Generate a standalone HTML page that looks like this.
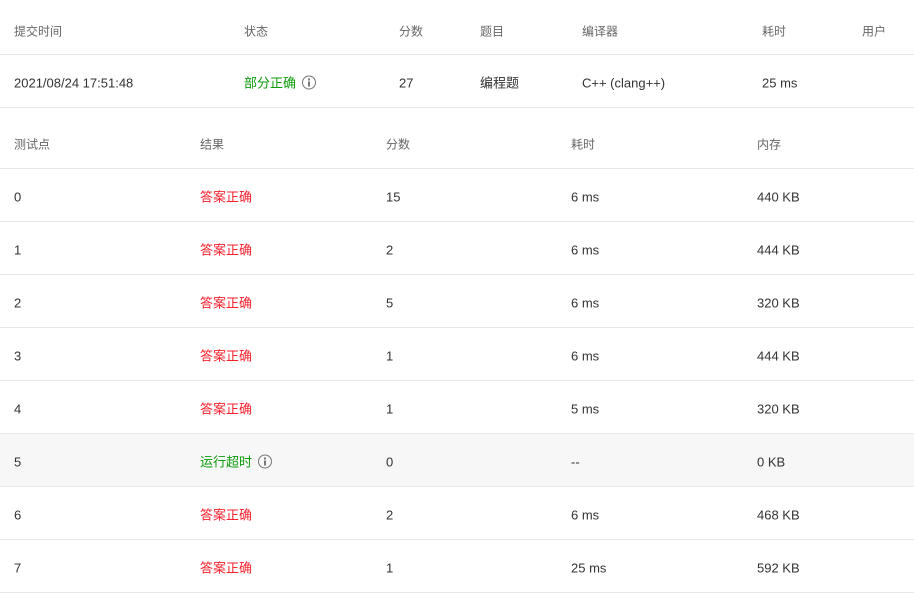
<!DOCTYPE html>
<html><head><meta charset="utf-8"><style>
html,body{margin:0;padding:0;background:#fff;width:914px;height:593px;overflow:hidden}
body{font-family:"Liberation Sans","Noto Sans CJK SC",sans-serif;font-size:13px;color:#333;position:relative}
.r{position:absolute;left:0;width:914px;border-bottom:1px solid #e8e8e8;box-sizing:border-box}
.c{position:absolute;top:calc(50% + 2px);transform:translateY(-50%);white-space:nowrap}
.h{color:#666;font-size:12px}
.red{color:#f5222d}
.grn{color:#0a9b0a}
.red,.grn{top:calc(50% + 1px)}
.i{display:inline-block;width:14px;height:14px;border:1.3px solid #777;border-radius:50%;box-sizing:border-box;vertical-align:-2px;margin-left:6px;position:relative}
.i:before{content:"";position:absolute;left:4.9px;top:2px;width:1.6px;height:1.6px;background:#777}
.i:after{content:"";position:absolute;left:4.9px;top:4.8px;width:1.6px;height:5px;background:#777}
</style></head><body>
<div class="r h" style="top:0;height:55px">
<span class="c" style="left:14px;top:31px">提交时间</span><span class="c" style="left:244px;top:31px">状态</span><span class="c" style="left:399px;top:31px">分数</span><span class="c" style="left:480px;top:31px">题目</span><span class="c" style="left:582px;top:31px">编译器</span><span class="c" style="left:762px;top:31px">耗时</span><span class="c" style="left:862px;top:31px">用户</span></div>
<div class="r" style="top:55px;height:53px">
<span class="c" style="left:14px">2021/08/24 17:51:48</span><span class="c grn" style="left:244px">部分正确<span class="i"></span></span><span class="c" style="left:399px">27</span><span class="c" style="left:480px;top:calc(50% + 1px)">编程题</span><span class="c" style="left:582px">C++ (clang++)</span><span class="c" style="left:762px">25 ms</span></div>
<div class="r h" style="top:120px;height:49px">
<span class="c" style="left:14px;top:24px">测试点</span><span class="c" style="left:200px;top:24px">结果</span><span class="c" style="left:386px;top:24px">分数</span><span class="c" style="left:571px;top:24px">耗时</span><span class="c" style="left:757px;top:24px">内存</span></div>
<div class="r" style="top:169px;height:53px"><span class="c" style="left:14px">0</span><span class="c red" style="left:200px">答案正确</span><span class="c" style="left:386px">15</span><span class="c" style="left:571px">6 ms</span><span class="c" style="left:757px">440 KB</span></div>
<div class="r" style="top:222px;height:53px"><span class="c" style="left:14px">1</span><span class="c red" style="left:200px">答案正确</span><span class="c" style="left:386px">2</span><span class="c" style="left:571px">6 ms</span><span class="c" style="left:757px">444 KB</span></div>
<div class="r" style="top:275px;height:53px"><span class="c" style="left:14px">2</span><span class="c red" style="left:200px">答案正确</span><span class="c" style="left:386px">5</span><span class="c" style="left:571px">6 ms</span><span class="c" style="left:757px">320 KB</span></div>
<div class="r" style="top:328px;height:53px"><span class="c" style="left:14px">3</span><span class="c red" style="left:200px">答案正确</span><span class="c" style="left:386px">1</span><span class="c" style="left:571px">6 ms</span><span class="c" style="left:757px">444 KB</span></div>
<div class="r" style="top:381px;height:53px"><span class="c" style="left:14px">4</span><span class="c red" style="left:200px">答案正确</span><span class="c" style="left:386px">1</span><span class="c" style="left:571px">5 ms</span><span class="c" style="left:757px">320 KB</span></div>
<div class="r" style="top:434px;height:53px;background:#f7f7f7"><span class="c" style="left:14px">5</span><span class="c grn" style="left:200px">运行超时<span class="i"></span></span><span class="c" style="left:386px">0</span><span class="c" style="left:571px">--</span><span class="c" style="left:757px">0 KB</span></div>
<div class="r" style="top:487px;height:53px"><span class="c" style="left:14px">6</span><span class="c red" style="left:200px">答案正确</span><span class="c" style="left:386px">2</span><span class="c" style="left:571px">6 ms</span><span class="c" style="left:757px">468 KB</span></div>
<div class="r" style="top:540px;height:53px"><span class="c" style="left:14px">7</span><span class="c red" style="left:200px">答案正确</span><span class="c" style="left:386px">1</span><span class="c" style="left:571px">25 ms</span><span class="c" style="left:757px">592 KB</span></div>
</body></html>
